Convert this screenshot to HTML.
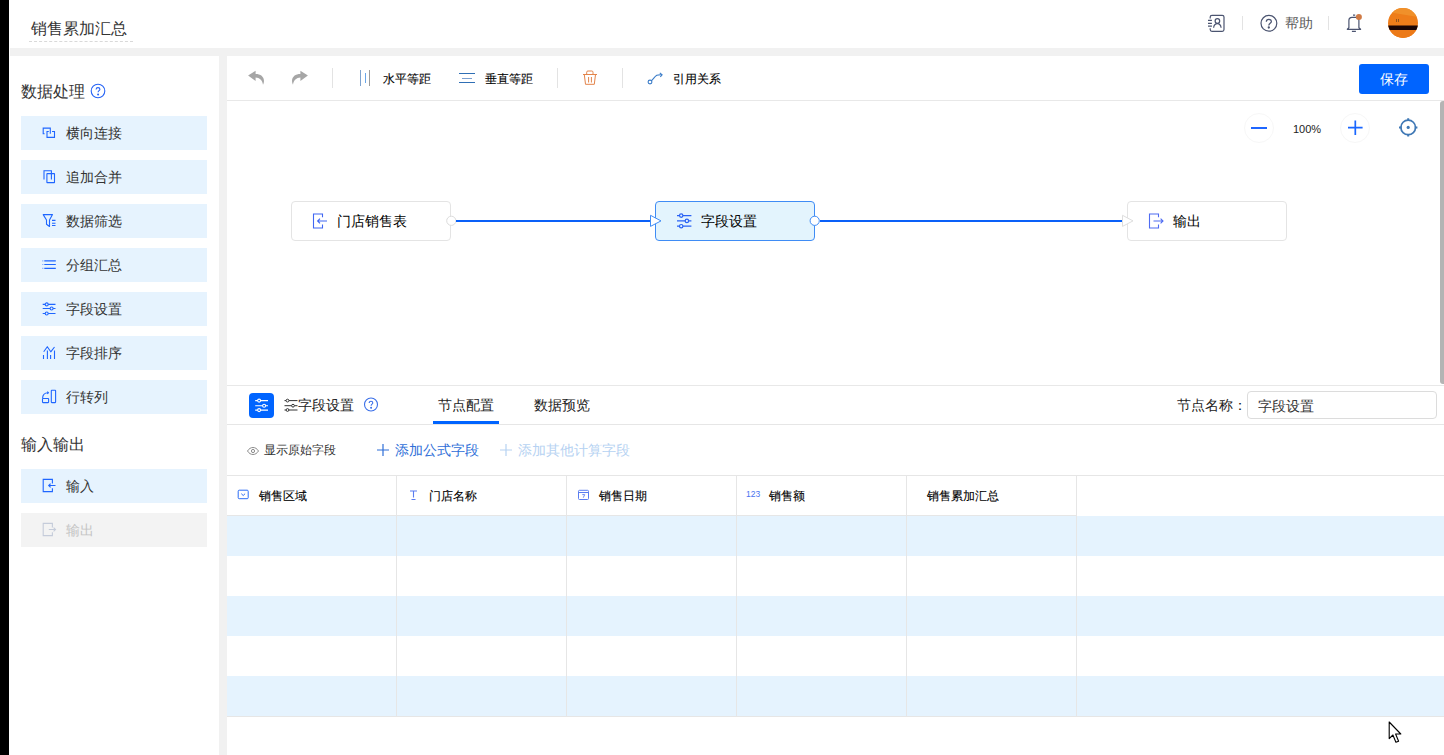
<!DOCTYPE html>
<html><head><meta charset="utf-8">
<style>
*{box-sizing:border-box;margin:0;padding:0}
html,body{width:1444px;height:755px;overflow:hidden}
body{position:relative;background:#f1f1f1;font-family:"Liberation Sans",sans-serif;color:#222}
.abs,svg{position:absolute}
.t{position:absolute;white-space:nowrap}
#black{left:0;top:0;width:9px;height:755px;background:#000}
#whiteline{left:9px;top:0;width:1px;height:755px;background:#fff}
#header{left:9px;top:0;width:1435px;height:48px;background:#fff}
#title{left:31px;top:18px;font-size:16px;line-height:22px;color:#333}
#title-ul{left:29px;top:41px;width:104px;height:1px;border-top:1px dashed #d9d9d9}
#sidebar{left:10px;top:56px;width:209px;height:699px;background:#fff}
#main{left:227px;top:56px;width:1217px;height:699px;background:#fff}
.sec{position:absolute;left:21px;font-size:16px;line-height:22px;color:#333;white-space:nowrap}
.item{position:absolute;left:21px;width:186px;height:34px;background:#e6f3fe;font-size:14px;line-height:35px;color:#333;white-space:nowrap}
.item span{position:absolute;left:45px;top:0}
.item svg{left:17px;top:6px}
.item.dis{background:#f3f3f3;color:#c4c4c4}
.vd{position:absolute;width:1px;background:#e3e3e3}
.tb{font-size:12px;line-height:16px;color:#000;-webkit-text-stroke:0.1px #000}
.node{position:absolute;width:160px;height:40px;border:1px solid #e4e4e4;border-radius:4px;background:#fff;font-size:14px;line-height:38px;color:#000}
.node span{position:absolute;left:45px;top:0}
.hd{position:absolute;height:1px;background:#e6e6e6}
.th{font-size:12px;line-height:16px;color:#000;-webkit-text-stroke:0.1px #000}
.stripe{position:absolute;left:227px;width:1217px;height:40px;background:#e5f3fe}
.cd{position:absolute;width:1px;top:476px;height:240px;background:#e6e6e6}
</style></head><body>
<div id="black" class="abs"></div>
<div id="whiteline" class="abs"></div>
<div id="header" class="abs"></div>
<div id="title" class="t">销售累加汇总</div>
<div id="title-ul" class="abs"></div>

<!-- header right -->
<svg style="left:1204px;top:10px" width="26" height="26" viewBox="0 0 26 26" fill="none" stroke="#4b5470" stroke-width="1.2">
  <path d="M6.2 8.6V7.1Q6.2 5.3 8 5.3H18.2Q20 5.3 20 7.1V19.5Q20 21.3 18.2 21.3H8Q6.2 21.3 6.2 19.5V18.2"/>
  <path d="M4 10.3h3.9M4 13.4h3.9M4 16.2h3.9"/>
  <circle cx="13.4" cy="11" r="2.3"/>
  <path d="M9.6 17.8C9.9 15.4 11.4 13.7 13.4 13.7S16.8 15.4 17.1 17.8"/>
</svg>
<div class="vd" style="left:1242px;top:16px;height:14px"></div>
<svg style="left:1256px;top:10px" width="26" height="26" viewBox="0 0 26 26" fill="none" stroke="#4b5470" stroke-width="1.2">
  <circle cx="12.9" cy="13.3" r="7.9"/>
  <path d="M10.3 11.7C10.3 10.2 11.4 9.3 12.8 9.3S15.4 10.2 15.4 11.5C15.4 13.3 12.8 13.4 12.8 15.5"/>
  <circle cx="12.8" cy="17.5" r=".55" fill="#4b5470"/>
</svg>
<div class="t" style="left:1285px;top:14px;font-size:14px;line-height:18px;color:#5c5c5c">帮助</div>
<div class="vd" style="left:1328px;top:16px;height:14px"></div>
<svg style="left:1340px;top:8px" width="28" height="28" viewBox="0 0 28 28" fill="none" stroke="#4b5470" stroke-width="1.2">
  <path d="M8.9 19.8V12.4Q8.9 9.3 12 9.3H15.8Q18.9 9.3 18.9 12.4V19.8L20.6 21.3H7.3Z" stroke-linejoin="round"/>
  <path d="M13 7.2h2.2M11.9 23.4h4"/>
  <circle cx="18.9" cy="8.9" r="3" fill="#d07a44" stroke="none"/>
</svg>
<svg style="left:1388px;top:8px" width="30" height="30" viewBox="0 0 30 30">
  <defs><clipPath id="cc"><circle cx="15" cy="15" r="15"/></clipPath></defs>
  <g clip-path="url(#cc)">
    <rect width="30" height="30" fill="#ee7d1a"/>
    <path d="M0 4 L30 9 V0 H0Z" fill="#f0902a"/>
    <rect x="0" y="17.5" width="30" height="4.5" fill="#1a0505"/>
    <rect x="0" y="22" width="30" height="8" fill="#ec7a18"/>
    <rect x="8" y="11" width="0.8" height="3" fill="#7a4a20"/>
    <rect x="10" y="11" width="0.8" height="3" fill="#7a4a20"/>
  </g>
</svg>

<div id="sidebar" class="abs"></div>
<div class="sec" style="top:81px">数据处理</div>
<svg style="left:90px;top:83px" width="16" height="16" viewBox="0 0 16 16" fill="none" stroke="#2563f5" stroke-width="1.1">
  <circle cx="8" cy="8" r="6.8"/>
  <path d="M6.1 6.4c0-1.1.8-1.8 1.9-1.8s1.9.7 1.9 1.7c0 1.4-1.8 1.4-1.8 3"/>
  <circle cx="8.1" cy="11.4" r=".45" fill="#3a6fe8"/>
</svg>
<div class="item" style="top:116px"><span>横向连接</span>
<svg width="22" height="22" viewBox="0 0 22 22" fill="none" stroke="#1f66ff" stroke-width="1.1"><path d="M6.6 11.8H5.2V6.1h7.1v5.7"/><path d="M10.8 9.5H9v5.9h7.5V9.5H14"/></svg></div>
<div class="item" style="top:160px"><span>追加合并</span>
<svg width="22" height="22" viewBox="0 0 22 22" fill="none" stroke="#1f66ff" stroke-width="1.1"><path d="M6 13.6V4.7h7.4v8.9"/><rect x="8.9" y="7.6" width="7.6" height="9" rx=".3"/></svg></div>
<div class="item" style="top:204px"><span>数据筛选</span>
<svg width="22" height="22" viewBox="0 0 22 22" fill="none" stroke="#1f66ff" stroke-width="1.1"><path d="M5.2 4.6h9.3L11.5 10v6.5L8.5 14.3V10z" stroke-linejoin="round"/><path d="M14 10.4h3.5M14 13.3h3.5M14 15.5h3.5"/></svg></div>
<div class="item" style="top:248px"><span>分组汇总</span>
<svg width="22" height="22" viewBox="0 0 22 22" fill="none" stroke="#1f66ff" stroke-width="1.1"><path d="M4.6 6.9h.6M6.3 6.9h11.5M4.6 10.5h.6M6.3 10.5h11.5M4.6 14.4h.6M6.3 14.4h11.5"/></svg></div>
<div class="item" style="top:292px"><span>字段设置</span>
<svg width="22" height="22" viewBox="0 0 22 22" fill="none" stroke="#1f66ff" stroke-width="1.1"><path d="M4.7 6.4h2.5M10.2 6.4h7.3M4.7 10.5h7.4M15.1 10.5h2.4M4.7 15.5h2.5M10.2 15.5h7.3"/><circle cx="8.7" cy="6.4" r="1.5"/><circle cx="13.6" cy="10.5" r="1.5"/><circle cx="8.7" cy="15.5" r="1.5"/></svg></div>
<div class="item" style="top:336px"><span>字段排序</span>
<svg width="22" height="22" viewBox="0 0 22 22" fill="none" stroke="#1f66ff" stroke-width="1.1"><path d="M5.7 9.8L9.3 4.7l3.5 5.1 3.7-4.8" stroke-linejoin="round"/><path d="M5.5 13v4M9.4 8.5v8.5M12.6 13v4M16.5 8.5v8.5"/></svg></div>
<div class="item" style="top:380px"><span>行转列</span>
<svg width="22" height="22" viewBox="0 0 22 22" fill="none" stroke="#1f66ff" stroke-width="1.1"><rect x="4.5" y="12.5" width="6.1" height="4.1" rx=".5"/><rect x="13.3" y="4.2" width="4.3" height="12.4" rx=".5"/><path d="M4.6 12.3c0-3.5 2.3-5.5 5.5-5.6"/><path d="M9.3 5.6l1.1 1.1-1.1 1.1"/></svg></div>
<div class="sec" style="top:434px">输入输出</div>
<div class="item" style="top:469px"><span>输入</span>
<svg style="top:7px" width="22" height="22" viewBox="0 0 22 22" fill="none" stroke="#1f66ff" stroke-width="1.1"><path d="M14.4 7.5V3.4H5.2v12.2h9.2v-3.4"/><path d="M17.5 9.5h-6.7M12.6 7.6l-1.9 1.9 1.9 1.9"/></svg></div>
<div class="item dis" style="top:513px"><span>输出</span>
<svg style="top:7px" width="22" height="22" viewBox="0 0 22 22" fill="none" stroke="#c5ccda" stroke-width="1.1"><path d="M14.4 7.5V3.4H5.2v12.2h9.2v-3.4"/><path d="M10.8 9.5h6.7M15.6 7.6l1.9 1.9-1.9 1.9"/></svg></div>

<div id="main" class="abs"></div>
<!-- toolbar -->
<svg style="left:248px;top:70px" width="17" height="16" viewBox="0 0 17 16" fill="#a6a6a6"><path d="M0.1 5.4L7.6 0.8V3.9C12.5 3.9 16 6.5 16 11C16 12.5 15.6 13.8 15 14.8C14.5 10.5 11.5 7.6 7.6 7.6V11Z"/></svg>
<svg style="left:291px;top:70px" width="17" height="16" viewBox="0 0 17 16" fill="#a6a6a6"><path transform="translate(17 0) scale(-1 1)" d="M0.1 5.4L7.6 0.8V3.9C12.5 3.9 16 6.5 16 11C16 12.5 15.6 13.8 15 14.8C14.5 10.5 11.5 7.6 7.6 7.6V11Z"/></svg>
<div class="vd" style="left:332px;top:68px;height:20px"></div>
<div class="abs" style="left:360px;top:70px;width:1px;height:16px;background:#7fa3cf"></div>
<div class="abs" style="left:365px;top:73px;width:1px;height:10px;background:#6aa6e8"></div>
<div class="abs" style="left:369px;top:70px;width:1px;height:16px;background:#9c9c9c"></div>
<div class="t tb" style="left:383px;top:71px">水平等距</div>
<div class="abs" style="left:459px;top:73px;width:16px;height:1px;background:#2f6fb5"></div>
<div class="abs" style="left:462px;top:77.5px;width:10px;height:1px;background:#7b9fd0"></div>
<div class="abs" style="left:459px;top:82px;width:16px;height:1px;background:#2f6fb5"></div>
<div class="t tb" style="left:485px;top:71px">垂直等距</div>
<div class="vd" style="left:557px;top:68px;height:20px"></div>
<svg style="left:582px;top:69px" width="16" height="17" viewBox="0 0 16 17" fill="none" stroke="#e3844a" stroke-width="1"><path d="M1 5.5h14"/><path d="M4.7 5.3V3.2Q4.7 2 5.9 2H9.8Q11 2 11 3.2V5.3"/><path d="M2.3 5.5l1.2 9.8h8.8l1.2-9.8"/><path d="M6.6 8v5.5M9.4 8v5.5"/></svg>
<div class="vd" style="left:622px;top:68px;height:20px"></div>
<svg style="left:645px;top:70px" width="20" height="16" viewBox="0 0 20 16" fill="none" stroke="#3a7cc8" stroke-width="1.1"><circle cx="5" cy="12" r="1.9"/><path d="M6.4 10.7C8.2 9.3 9.6 6.4 11.8 5.2C13 4.7 15 4.8 16.8 4.75"/><path d="M14.8 2.8l2.3 1.95-1.8 2.1"/></svg>
<div class="t tb" style="left:673px;top:71px">引用关系</div>
<div class="abs" style="left:1359px;top:64px;width:70px;height:30px;background:#0064ff;border-radius:3px;color:#fff;font-size:14px;line-height:30px;text-align:center">保存</div>
<div class="hd" style="left:227px;top:100px;width:1217px;background:#e8e8e8"></div>
<!-- scrollbar -->
<div class="abs" style="left:1440px;top:101px;width:4px;height:283px;background:#b4b4b4;border-radius:3px 0 0 3px"></div>

<!-- zoom controls -->
<div class="abs" style="left:1244px;top:113px;width:30px;height:30px;border:1px solid #f7f7f7;border-radius:50%"></div>
<div class="abs" style="left:1251px;top:127px;width:16px;height:2px;background:#1f66ff"></div>
<div class="t" style="left:1293px;top:122px;font-size:11px;line-height:14px;color:#222">100%</div>
<div class="abs" style="left:1340px;top:113px;width:30px;height:30px;border:1px solid #f7f7f7;border-radius:50%"></div>
<svg style="left:1340px;top:113px" width="30" height="30" viewBox="0 0 30 30" fill="none" stroke="#1966ff" stroke-width="1.7"><path d="M8 14.7h14.6M15.3 7.4v14.6"/></svg>
<svg style="left:1396px;top:116px" width="24" height="24" viewBox="0 0 24 24" fill="none" stroke="#3f78b5" stroke-width="1.7"><circle cx="12.2" cy="11.4" r="7.3"/><circle cx="12.2" cy="11.4" r="1.6" fill="#3f78b5" stroke="none"/><path d="M12.2 2.2v2.6M12.2 18v2.6M3 11.4h2.6M18.8 11.4h2.6" stroke-width="2"/></svg>

<!-- nodes -->
<div class="node" style="left:291px;top:201px"><span>门店销售表</span></div>
<svg style="left:311px;top:212px" width="18" height="18" viewBox="0 0 18 18" fill="none" stroke="#3f66f2" stroke-width="1.1"><path d="M11.5 5.2V2H2.5v14h9v-3.4"/><path d="M16 9H6.5M9 6.6L6.6 9 9 11.4"/></svg>
<svg style="left:440px;top:210px" width="20" height="22" viewBox="0 0 20 22"><circle cx="11.3" cy="10.8" r="4.6" fill="#fff" stroke="#dcdcdc" stroke-width="1"/></svg>
<div class="abs" style="left:456px;top:220px;width:195px;height:2px;background:#0a60f8"></div>

<div class="node" style="left:655px;top:201px;background:#e3f4fd;border-color:#3f8cf5"><span>字段设置</span></div>
<svg style="left:645px;top:210px" width="20" height="22" viewBox="0 0 20 22"><path d="M5.5 5.3L16 10.9 5.5 16.4Z" fill="#fff" stroke="#3f8cf5" stroke-width="1"/></svg>
<svg style="left:674px;top:211px" width="20" height="20" viewBox="0 0 20 20" fill="none" stroke="#2a62f5" stroke-width="1.2"><path d="M3 4.6h2.5M8.9 4.6h8.5M3 9.9h8.2M14.6 9.9h2.8M3 15.2h2.5M8.9 15.2h8.5"/><circle cx="7.2" cy="4.6" r="1.7"/><circle cx="12.9" cy="9.9" r="1.7"/><circle cx="7.2" cy="15.2" r="1.7"/></svg>
<svg style="left:804px;top:210px" width="20" height="22" viewBox="0 0 20 22"><circle cx="10.7" cy="10.8" r="4.6" fill="#fff" stroke="#3f8cf5" stroke-width="1"/></svg>
<div class="abs" style="left:820px;top:220px;width:303px;height:2px;background:#0a60f8"></div>

<div class="node" style="left:1127px;top:201px"><span>输出</span></div>
<svg style="left:1117px;top:210px" width="20" height="22" viewBox="0 0 20 22"><path d="M5.5 5.3L16 10.9 5.5 16.4Z" fill="#fff" stroke="#dedede" stroke-width="1"/></svg>
<svg style="left:1147px;top:212px" width="18" height="18" viewBox="0 0 18 18" fill="none" stroke="#4f6cf2" stroke-width="1.1"><path d="M11.5 5.2V2H2.5v14h9v-3.4"/><path d="M6.5 9H16M13.6 6.6L16 9l-2.4 2.4"/></svg>

<!-- bottom panel -->
<div class="hd" style="left:227px;top:385px;width:1217px;background:#e8e8e8"></div>
<div class="abs" style="left:249px;top:393px;width:25px;height:25px;background:#0064ff;border-radius:4px"></div>
<svg style="left:249px;top:393px" width="25" height="25" viewBox="0 0 25 25" fill="none" stroke="#fff" stroke-width="1.1"><path d="M6.2 7.6h2.4M11.6 7.6h7.4M6.2 12.7h7.4M16.6 12.7h2.4M6.2 17.1h2.4M11.6 17.1h7.4"/><circle cx="10.1" cy="7.6" r="1.5"/><circle cx="15.1" cy="12.7" r="1.5"/><circle cx="10.1" cy="17.1" r="1.5"/></svg>
<svg style="left:283px;top:397px" width="16" height="16" viewBox="0 0 16 16" fill="none" stroke="#333" stroke-width="1"><path d="M1.5 3.6h1.5M6 3.6h8.5M1.5 8.7h7M11.5 8.7h3M1.5 13h1.5M6 13h8.5"/><circle cx="4.5" cy="3.6" r="1.4"/><circle cx="10" cy="8.7" r="1.4"/><circle cx="4.5" cy="13" r="1.4"/></svg>
<div class="t" style="left:298px;top:396px;font-size:14px;line-height:18px;color:#222">字段设置</div>
<svg style="left:363px;top:397px" width="16" height="16" viewBox="0 0 16 16" fill="none" stroke="#3a6fe8" stroke-width="1.1"><circle cx="8" cy="7.5" r="6.5"/><path d="M6.2 6c0-1 .8-1.7 1.8-1.7s1.8.7 1.8 1.6c0 1.3-1.7 1.3-1.7 2.8"/><circle cx="8.1" cy="10.8" r=".45" fill="#3a6fe8"/></svg>
<div class="t" style="left:438px;top:396px;font-size:14px;line-height:18px;color:#222">节点配置</div>
<div class="abs" style="left:433px;top:421px;width:66px;height:4px;background:#0064ff"></div>
<div class="t" style="left:534px;top:396px;font-size:14px;line-height:18px;color:#222">数据预览</div>
<div class="t" style="left:1177px;top:396px;font-size:14px;line-height:18px;color:#222">节点名称：</div>
<div class="abs" style="left:1247px;top:391px;width:190px;height:28px;border:1px solid #dcdcdc;border-radius:4px"></div>
<div class="t" style="left:1258px;top:397px;font-size:14px;line-height:18px;color:#333">字段设置</div>
<div class="hd" style="left:227px;top:424px;width:1217px;background:#e6e6e6"></div>

<svg style="left:246px;top:443.5px" width="14" height="14" viewBox="0 0 14 14" fill="none" stroke="#8c8c8c" stroke-width="1"><path d="M1.5 7C3 4.6 4.9 3.5 7 3.5S11 4.6 12.5 7C11 9.4 9.1 10.5 7 10.5S3 9.4 1.5 7Z"/><circle cx="7" cy="7" r="1.6"/></svg>
<div class="t" style="left:264px;top:442px;font-size:12px;line-height:16px;color:#333">显示原始字段</div>
<svg style="left:376px;top:443px" width="14" height="14" viewBox="0 0 14 14" fill="none" stroke="#2f6fd8" stroke-width="1.2"><path d="M1 7h12M7 1v12"/></svg>
<div class="t" style="left:395px;top:441px;font-size:14px;line-height:18px;color:#2f6fd8">添加公式字段</div>
<svg style="left:499px;top:443px" width="14" height="14" viewBox="0 0 14 14" fill="none" stroke="#b6d2f2" stroke-width="1.2"><path d="M1 7h12M7 1v12"/></svg>
<div class="t" style="left:518px;top:441px;font-size:14px;line-height:18px;color:#b6d2f2">添加其他计算字段</div>

<!-- table -->
<div class="hd" style="left:227px;top:475px;width:1217px;background:#e6e6e6"></div>
<div class="stripe" style="top:516px"></div>
<div class="stripe" style="top:596px"></div>
<div class="stripe" style="top:676px"></div>
<div class="hd" style="left:227px;top:515px;width:850px;background:#e6e6e6"></div>
<div class="hd" style="left:227px;top:716px;width:1217px;background:#e6e6e6"></div>
<div class="cd" style="left:396px"></div>
<div class="cd" style="left:566px"></div>
<div class="cd" style="left:736px"></div>
<div class="cd" style="left:906px"></div>
<div class="cd" style="left:1076px"></div>

<svg style="left:237px;top:489px" width="12" height="11" viewBox="0 0 12 11" fill="none" stroke="#2b6cf5" stroke-width="1"><rect x="1.2" y="1.2" width="10" height="8.5" rx="1"/><path d="M4.3 4.7l1.9 1.8 1.9-1.8"/></svg>
<div class="t th" style="left:259px;top:488px">销售区域</div>
<svg style="left:409px;top:489px" width="10" height="12" viewBox="0 0 10 12" fill="none" stroke="#5a7cf0" stroke-width="1.1"><path d="M1 2h7M4.5 2v6.5M2.5 10.5h4"/></svg>
<div class="t th" style="left:429px;top:488px">门店名称</div>
<svg style="left:577px;top:489px" width="13" height="12" viewBox="0 0 13 12" fill="none" stroke="#5a7cf0" stroke-width="1"><rect x="1.5" y="1.3" width="10" height="9.2" rx="1"/><path d="M1.5 3.5h10"/><path d="M5.3 5.6h2.4L6.3 8.7" stroke-width=".9"/></svg>
<div class="t th" style="left:599px;top:488px">销售日期</div>
<div class="t" style="left:746px;top:489px;font-size:8.5px;line-height:10px;color:#4a73f0;letter-spacing:0px">123</div>
<div class="t th" style="left:769px;top:488px">销售额</div>
<div class="t th" style="left:927px;top:488px">销售累加汇总</div>

<!-- cursor -->
<svg style="left:1388px;top:721px" width="16" height="24" viewBox="0 0 16 24"><path d="M1.2 1V17.6L4.9 14L7.9 21.3L10.6 20.2L7.6 13H12.8Z" fill="#fff" stroke="#000" stroke-width="1.1" stroke-linejoin="round"/></svg>
</body></html>
